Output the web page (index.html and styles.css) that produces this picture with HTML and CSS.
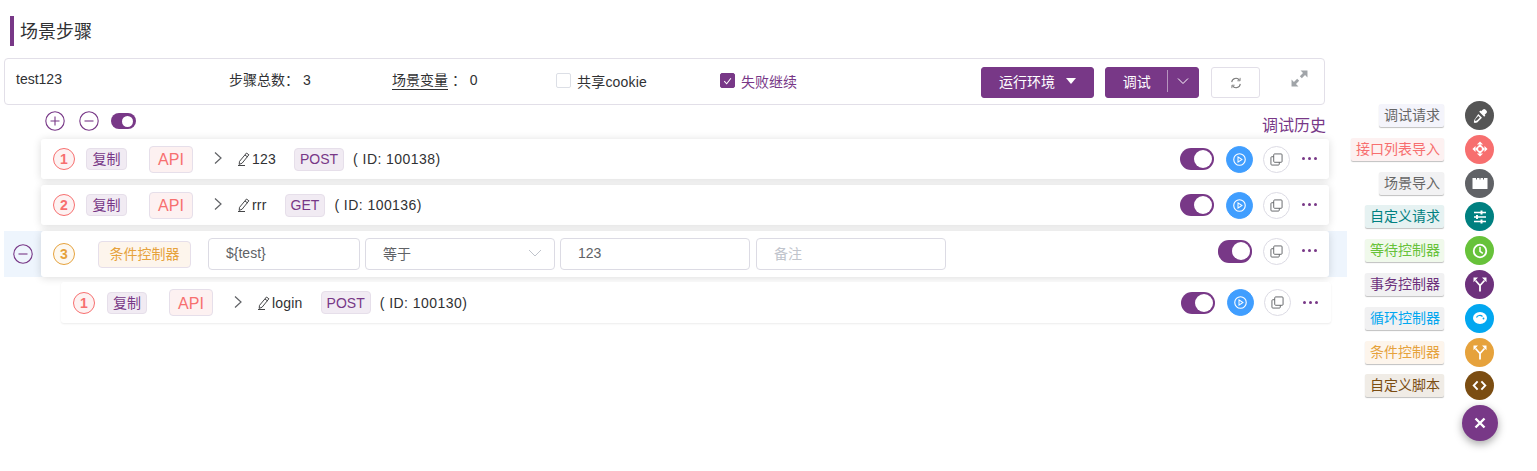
FILE: index.html
```html
<!DOCTYPE html>
<html lang="zh-CN">
<head>
  <meta charset="UTF-8" />
  <title>场景步骤</title>
  <link rel="stylesheet" href="styles.css">
</head>
<body>
<svg class="defs" width="0" height="0">
  <symbol id="i-pen" viewBox="0 0 14 14">
    <path d="M9.500 1l2.400 1.800-6.800 8.400-2.900 1.200.3-3zM8 3l2.400 1.800M1 13.500h7" fill="none" stroke="currentColor" stroke-width=".9"/>
  </symbol>
  <symbol id="i-chev" viewBox="0 0 10 14">
    <path d="M2 1.500l6 5.500-6 5.500" fill="none" stroke="currentColor" stroke-width="1.200"/>
  </symbol>
  <symbol id="i-play" viewBox="0 0 14 14">
    <circle cx="7" cy="7" r="6.200" fill="none" stroke="#fff" stroke-width="1.200"/>
    <path d="M5.400 4.200l4.200 2.800-4.200 2.800z" fill="none" stroke="#fff" stroke-width="1.100"/>
  </symbol>
  <symbol id="i-copy" viewBox="0 0 14 14">
    <rect x="4" y="1" width="9" height="9" rx="1" fill="#fff" stroke="currentColor" stroke-width="1"/>
    <path d="M4 4H2a1 1 0 0 0-1 1v7a1 1 0 0 0 1 1h7a1 1 0 0 0 1-1v-2" fill="none" stroke="currentColor" stroke-width="1"/>
  </symbol>
  <symbol id="i-fork" viewBox="0 0 16 16">
    <path d="M8 15.500V9.500M8 9.500L3.500 4.500M8 9.500l4.500-5" fill="none" stroke="#fff" stroke-width="1.800"/>
    <path d="M1.500 1.500h4.500L1.500 6.200zM14.500 1.500H10l4.500 4.700z" fill="#fff"/>
  </symbol>
</svg>

<div class="page">
  <h2 class="title">场景步骤</h2>

  <div class="head-card">
    <span class="cell cell-name">test123</span>
    <span class="cell cell-count">步骤总数：&nbsp;3</span>
    <span class="cell cell-var"><u>场景变量</u>&nbsp;：&nbsp;0</span>
    <label class="cell cell-check"><i class="check"></i>共享cookie</label>
    <label class="cell cell-on"><i class="check checked"><svg viewBox="0 0 14 14" width="14" height="14"><path d="M3.500 7.200l2.600 2.800 4.600-6" fill="none" stroke="#fff" stroke-width="1.100"/></svg></i>失败继续</label>
    <div class="head-actions">
      <button class="btn btn-env">运行环境<i class="caret"></i></button>
      <button class="btn btn-debug">
        <span class="btn-main">调试</span>
        <span class="btn-split">
          <svg viewBox="0 0 12 8" width="12" height="8"><path d="M1 1.500l5 5 5-5" fill="none" stroke="#fff" stroke-width="1"/></svg>
        </span>
      </button>
      <button class="btn btn-plain">
        <svg viewBox="0 0 14 14" width="12" height="12"><path d="M2 6a5 5 0 0 1 9-2.400M12 8a5 5 0 0 1-9 2.400" fill="none" stroke="#777" stroke-width="1.200"/><path d="M11.800 1v3.400H8.600M2.200 13V9.600h3.200" fill="none" stroke="#777" stroke-width="1"/></svg>
      </button>
      <svg class="expand" viewBox="0 0 16 16" width="17" height="17"><path d="M9 .5h6.500V7l-2.300-2.300-3 3-1.900-1.900 3-3zM7 15.500H.5V9l2.300 2.300 3-3 1.900 1.900-3 3z" fill="#a0a4a8"/></svg>
    </div>
  </div>

  <div class="tools">
    <div class="tools-left">
      <svg class="round-ico" viewBox="0 0 20 20"><circle cx="10" cy="10" r="9.200" /><path d="M5.500 10h9M10 5.500v9"/></svg>
      <svg class="round-ico" viewBox="0 0 20 20"><circle cx="10" cy="10" r="9.200" /><path d="M5.500 10h9"/></svg>
      <span class="mini-switch"><i></i></span>
    </div>
    <a class="history">调试历史</a>
  </div>

  <div class="steps">
    <div class="step">
      <span class="num">1</span>
      <span class="tag tag-copy">复制</span>
      <span class="tag tag-api">API</span>
      <svg class="chev"><use href="#i-chev"/></svg>
      <svg class="pen"><use href="#i-pen"/></svg>
      <span class="name">123</span>
      <span class="tag tag-method">POST</span>
      <span class="step-id">( ID: 100138)</span>
      <div class="step-right">
        <span class="switch"><i></i></span>
        <span class="circle-btn play"><svg><use href="#i-play"/></svg></span>
        <span class="circle-btn"><svg><use href="#i-copy"/></svg></span>
        <span class="dots"><i></i><i></i><i></i></span>
      </div>
    </div>

    <div class="step">
      <span class="num">2</span>
      <span class="tag tag-copy">复制</span>
      <span class="tag tag-api">API</span>
      <svg class="chev"><use href="#i-chev"/></svg>
      <svg class="pen"><use href="#i-pen"/></svg>
      <span class="name">rrr</span>
      <span class="tag tag-method">GET</span>
      <span class="step-id">( ID: 100136)</span>
      <div class="step-right">
        <span class="switch"><i></i></span>
        <span class="circle-btn play"><svg><use href="#i-play"/></svg></span>
        <span class="circle-btn"><svg><use href="#i-copy"/></svg></span>
        <span class="dots"><i></i><i></i><i></i></span>
      </div>
    </div>

    <div class="step-group">
      <svg class="round-ico group-ico" viewBox="0 0 20 20"><circle cx="10" cy="10" r="9.200" /><path d="M5.500 10h9"/></svg>
      <div class="step step-cond">
        <span class="num num-cond">3</span>
        <span class="tag tag-cond">条件控制器</span>
        <span class="field field-var">${test}</span>
        <span class="field field-select">等于
          <svg viewBox="0 0 14 8" width="14" height="8"><path d="M1 1l6 6 6-6" fill="none" stroke="#c0c4cc" stroke-width="1"/></svg>
        </span>
        <span class="field field-val">123</span>
        <span class="field field-val field-empty">备注</span>
        <div class="step-right">
          <span class="switch switch-big"><i></i></span>
          <span class="circle-btn"><svg><use href="#i-copy"/></svg></span>
          <span class="dots"><i></i><i></i><i></i></span>
        </div>
      </div>
    </div>

    <div class="step step-child">
      <span class="num">1</span>
      <span class="tag tag-copy">复制</span>
      <span class="tag tag-api">API</span>
      <svg class="chev"><use href="#i-chev"/></svg>
      <svg class="pen"><use href="#i-pen"/></svg>
      <span class="name">login</span>
      <span class="tag tag-method">POST</span>
      <span class="step-id">( ID: 100130)</span>
      <div class="step-right">
        <span class="switch"><i></i></span>
        <span class="circle-btn play"><svg><use href="#i-play"/></svg></span>
        <span class="circle-btn"><svg><use href="#i-copy"/></svg></span>
        <span class="dots"><i></i><i></i><i></i></span>
      </div>
    </div>
  </div>
</div>

<div class="fab-menu">
  <div class="fab-item">
    <span class="fab-label l-debug">调试请求</span>
    <span class="fab c-debug"><svg viewBox="0 0 16 16" width="16" height="16"><path d="M11 1.500a1.600 1.600 0 0 1 2.300 0l1.200 1.200a1.600 1.600 0 0 1 0 2.300l-1.800 1.800.7.700-1.200 1.200-5-5 1.200-1.200.7.700zM6.300 6l3.700 3.700-4.800 4.800-2.500.6-.9-.9.600-2.500zM6.400 8l-3 3-.4 1.900 1.900-.4 3-3z" fill="#fff" fill-rule="evenodd"/></svg></span>
  </div>
  <div class="fab-item">
    <span class="fab-label l-import">接口列表导入</span>
    <span class="fab c-import"><svg viewBox="0 0 18 18" width="16" height="16"><path d="M9 .5L12.500 4h-7zM9 17.500L5.500 14h7zM.5 9L4 5.500v7zM17.500 9L14 12.500v-7z" fill="#fff"/><path d="M9 3.500L14.500 9 9 14.500 3.500 9z" fill="#fff"/><circle cx="9" cy="9" r="2.200" fill="#f76f6f"/></svg></span>
  </div>
  <div class="fab-item">
    <span class="fab-label l-scene">场景导入</span>
    <span class="fab c-scene"><svg viewBox="0 0 16 16" width="16" height="16"><path d="M.5 3h15v10.500a.5.5 0 0 1-.5.5H1a.5.5 0 0 1-.5-.5z" fill="#fff"/><path d="M4.500 3v1.500M8 3v1.500M11.500 3v1.500" stroke="#606266" stroke-width="1"/></svg></span>
  </div>
  <div class="fab-item">
    <span class="fab-label l-custom">自定义请求</span>
    <span class="fab c-custom"><svg viewBox="0 0 16 16" width="16" height="16"><path d="M2 3.500h12M2 8h12M2 12.500h12" stroke="#fff" stroke-width="1.600"/><path d="M9.500 1.500v4M5 6v4M9.500 10.500v4" stroke="#fff" stroke-width="2"/></svg></span>
  </div>
  <div class="fab-item">
    <span class="fab-label l-wait">等待控制器</span>
    <span class="fab c-wait"><svg viewBox="0 0 16 16" width="16" height="16"><circle cx="8" cy="8" r="6.300" fill="none" stroke="#fff" stroke-width="1.800"/><path d="M8 4v4.300l2.800 2" fill="none" stroke="#fff" stroke-width="1.500"/></svg></span>
  </div>
  <div class="fab-item">
    <span class="fab-label l-trans">事务控制器</span>
    <span class="fab c-trans"><svg viewBox="0 0 16 16" width="16" height="16"><use href="#i-fork"/></svg></span>
  </div>
  <div class="fab-item">
    <span class="fab-label l-loop">循环控制器</span>
    <span class="fab c-loop"><svg viewBox="0 0 16 16" width="16" height="16"><ellipse cx="8" cy="8" rx="7" ry="6" fill="#fff"/><path d="M4.500 7.500a3.500 3 0 0 1 6-1" fill="none" stroke="#02a7f0" stroke-width="1.200"/><circle cx="11.500" cy="8.500" r=".9" fill="#02a7f0"/></svg></span>
  </div>
  <div class="fab-item">
    <span class="fab-label l-cond">条件控制器</span>
    <span class="fab c-cond"><svg viewBox="0 0 16 16" width="16" height="16"><use href="#i-fork"/></svg></span>
  </div>
  <div class="fab-item">
    <span class="fab-label l-script">自定义脚本</span>
    <span class="fab c-script"><svg viewBox="0 0 16 16" width="15" height="15"><path d="M6 3.500L1.800 8 6 12.500M10 3.500L14.200 8 10 12.500" fill="none" stroke="#fff" stroke-width="2"/></svg></span>
  </div>
  <span class="fab-close">
    <svg viewBox="0 0 12 12" width="12" height="12"><path d="M1.500 1.500l9 9M10.500 1.500l-9 9" stroke="#fff" stroke-width="2.400"/></svg>
  </span>
</div>
</body>
</html>
```

FILE: styles.css
```css
* {
  box-sizing: border-box;
}

body {
  margin: 0;
  height: 471px;
  overflow: hidden;
  position: relative;
  background: #fff;
  font-family: "Liberation Sans", "Noto Sans CJK SC", sans-serif;
  font-size: 14px;
  color: #303133;
}

.defs {
  position: absolute;
}

.page {
  padding: 16px 0 0 4px;
}

.title {
  margin: 0 0 12px 6px;
  height: 30px;
  padding-left: 6px;
  border-left: 4px solid #783887;
  font-size: 18px;
  font-weight: 400;
  line-height: 32px;
}

/* top card */
.head-card {
  display: flex;
  align-items: center;
  width: 1321px;
  height: 47px;
  padding-left: 11px;
  border: 1px solid #e2dfe8;
  border-radius: 4px;
}

.cell {
  display: flex;
  align-items: center;
  white-space: pre;
}

.cell-name {
  width: 213px;
  margin-top: -5px;
}

.cell-count {
  width: 163px;
  margin-top: -6px;
}

.cell-var {
  width: 164px;
  margin-top: -5px;
}

.cell-var u {
  text-underline-offset: 4px;
}

.cell-check {
  width: 164px;
  margin-top: -2px;
  letter-spacing: .2px;
}

.cell-on {
  margin-top: -2px;
  color: #783887;
}

.check {
  display: inline-flex;
  width: 15px;
  height: 15px;
  margin-right: 6px;
  border: 1px solid #dcdfe6;
  border-radius: 2px;
}

.checked {
  background: #783887;
  border-color: #783887;
}

.head-actions {
  display: flex;
  align-items: center;
  margin-left: auto;
  margin-top: 2px;
  padding-right: 16px;
}

.btn {
  display: flex;
  align-items: center;
  justify-content: center;
  height: 31px;
  padding: 0 0 3px;
  border: 1px solid #783887;
  border-radius: 3px;
  background: #783887;
  color: #fff;
  font: inherit;
}

.btn-env {
  width: 113px;
}

.caret {
  margin-left: 11px;
  border: 5px solid transparent;
  border-top: 6px solid #fff;
  border-bottom: 0;
}

.btn-debug {
  width: 94px;
  margin-left: 11px;
}

.btn-main {
  width: 62px;
  text-align: center;
}

.btn-split {
  display: flex;
  align-items: center;
  justify-content: center;
  width: 31px;
  height: 22px;
  border-left: 1px solid #b795bf;
}

.btn-plain {
  width: 49px;
  margin-left: 12px;
  padding: 0;
  border-color: #e2dfe8;
  background: #fff;
}

.expand {
  margin-left: 31px;
  margin-top: -9px;
}

/* toolbar */
.tools {
  display: flex;
  align-items: center;
  justify-content: space-between;
  width: 1322px;
  height: 34px;
  padding-left: 41px;
}

.tools-left {
  display: flex;
  align-items: center;
  gap: 14px;
  margin-top: -2px;
}

.round-ico {
  width: 20px;
  height: 20px;
  fill: none;
  stroke: #783887;
  stroke-width: 1.100;
}

.mini-switch {
  display: flex;
  align-items: center;
  justify-content: flex-end;
  width: 25px;
  height: 16px;
  margin-left: -2px;
  padding-right: 3px;
  border-radius: 8px;
  background: #783887;
}

.mini-switch i {
  width: 11px;
  height: 11px;
  border-radius: 50%;
  background: #fff;
}

.history {
  margin-top: 3px;
  color: #783887;
  font-size: 16px;
}

/* step rows */
.steps {
  display: flex;
  flex-direction: column;
}

.step {
  display: flex;
  align-items: center;
  width: 1288px;
  height: 40px;
  margin: 0 0 6px 37px;
  padding-left: 12px;
  border-radius: 3px;
  background: #fff;
  box-shadow: 0 1px 8px rgba(0, 0, 0, .14);
}

.step-group {
  display: flex;
  align-items: center;
  width: 1343px;
  height: 46px;
  margin-bottom: 5px;
  padding-left: 9px;
  background: #eef5fd;
}

.group-ico {
  flex: none;
}

.step-cond {
  height: 46px;
  margin: 0 0 0 8px;
}

.step-cond .step-right {
  margin-top: -6px;
}

.step-child {
  width: 1270px;
  height: 41px;
  margin: 0 0 0 57px;
  box-shadow: 0 1px 2px rgba(0, 0, 0, .08);
}

.step-child .step-right {
  padding-right: 13px;
}

.step-child .tag-copy {
  width: 40px;
  margin-left: 1px;
}

.num {
  display: flex;
  align-items: center;
  justify-content: center;
  flex: none;
  width: 22px;
  height: 22px;
  margin-right: 11px;
  border: 1px solid #f76f6f;
  border-radius: 50%;
  background: #fdf2f2;
  color: #f76f6f;
  font-size: 14px;
  font-weight: 700;
}

.num-cond {
  margin-right: 23px;
  border-color: #e6a23c;
  background: #fdf8f0;
  color: #e6a23c;
}

.tag {
  display: flex;
  align-items: center;
  justify-content: center;
  flex: none;
  border: 1px solid #e6dfea;
  border-radius: 4px;
  white-space: nowrap;
}

.tag-copy {
  width: 41px;
  height: 22px;
  padding-bottom: 2px;
  background: #f1ebf3;
  color: #783887;
  font-size: 14px;
}

.tag-api {
  width: 44px;
  height: 27px;
  margin-left: 22px;
  padding-top: 2px;
  background: #fdf1f1;
  color: #f76f6f;
  font-size: 16px;
}

.tag-method {
  height: 23px;
  padding: 0 5px;
  background: #f1ebf3;
  color: #783887;
  font-size: 14px;
}

.tag-cond {
  width: 93px;
  height: 27px;
  margin-right: 17px;
  padding-bottom: 2px;
  background: #fdf5ec;
  color: #e6a23c;
  font-size: 14px;
}

.chev {
  flex: none;
  width: 10px;
  height: 14px;
  margin: -2px 14px 0 20px;
  color: #606266;
}

.pen {
  flex: none;
  width: 14px;
  height: 14px;
  color: #303133;
}

.name {
  margin-left: 1px;
  margin-right: 18px;
  letter-spacing: .2px;
}

.step-id {
  margin-left: 9px;
  font-size: 14px;
  letter-spacing: .45px;
}

.field {
  display: flex;
  align-items: center;
  flex: none;
  height: 32px;
  margin-right: 5px;
  padding: 0 0 3px 17px;
  border: 1px solid #dcdbe4;
  border-radius: 4px;
  color: #606266;
  font-size: 14px;
}

.field-var {
  width: 152px;
}

.field-select {
  justify-content: space-between;
  width: 190px;
  padding-right: 12px;
}

.field-val {
  width: 190px;
}

.field-empty {
  margin-left: 1px;
  color: #c0c4cc;
}

.step-right {
  display: flex;
  align-items: center;
  margin-left: auto;
  padding-right: 12px;
}

.switch {
  display: flex;
  align-items: center;
  justify-content: flex-end;
  width: 34px;
  height: 22px;
  margin-right: 12px;
  padding-right: 2px;
  border-radius: 11px;
  background: #783887;
}

.switch i {
  width: 18px;
  height: 18px;
  border-radius: 50%;
  background: #fff;
}

.switch-big {
  height: 23px;
  margin-right: 11px;
}

.circle-btn {
  display: flex;
  align-items: center;
  justify-content: center;
  width: 27px;
  height: 27px;
  margin-right: 12px;
  border: 1px solid #dcdbe4;
  border-radius: 50%;
  color: #606266;
}

.circle-btn svg {
  width: 13px;
  height: 13px;
}

.play {
  margin-right: 10px;
  border-color: #409eff;
  background: #409eff;
}

.dots {
  display: flex;
  gap: 3px;
  margin-top: -1px;
}

.dots i {
  width: 3px;
  height: 3px;
  border-radius: 50%;
  background: #783887;
}

/* floating menu on the right */
.fab-menu {
  position: absolute;
  top: 101px;
  right: 43px;
  display: flex;
  flex-direction: column;
  align-items: flex-end;
  gap: 4.800px;
}

.fab-item {
  display: flex;
  align-items: center;
  gap: 21px;
}

.fab-label {
  height: 23px;
  padding: 0 4px 0 5px;
  border-radius: 2px;
  box-shadow: 0 1px 1px rgba(0, 0, 0, .25);
  font-size: 14px;
  line-height: 23px;
}

.fab {
  display: flex;
  align-items: center;
  justify-content: center;
  width: 29px;
  height: 29px;
  border-radius: 50%;
}

.l-debug { background: #f4f4fb; color: #666; }
.l-import { background: #fdf1f1; color: #f76f6f; }
.l-scene { background: #f2f2f3; color: #666; }
.l-custom { background: #e6f2f2; color: #008080; }
.l-wait { background: #f0f9eb; color: #67c23a; }
.l-trans { background: #f1f1f2; color: #6d317c; }
.l-loop { background: #f1f1f2; color: #02a7f0; }
.l-cond { background: #fdf5ec; color: #e6a23c; }
.l-script { background: #f0ece6; color: #7b4d12; }

.c-debug { background: #555; }
.c-import { background: #f76f6f; }
.c-scene { background: #606266; }
.c-custom { background: #008080; }
.c-wait { background: #67c23a; }
.c-trans { background: #6d317c; }
.c-loop { background: #02a7f0; }
.c-cond { background: #e6a23c; }
.c-script { background: #7b4d12; }

.fab-close {
  display: flex;
  align-items: center;
  justify-content: center;
  width: 36px;
  height: 36px;
  margin: 0 -4px 0 0;
  border-radius: 50%;
  background: #783887;
  box-shadow: 0 3px 8px rgba(0, 0, 0, .35);
}
```
